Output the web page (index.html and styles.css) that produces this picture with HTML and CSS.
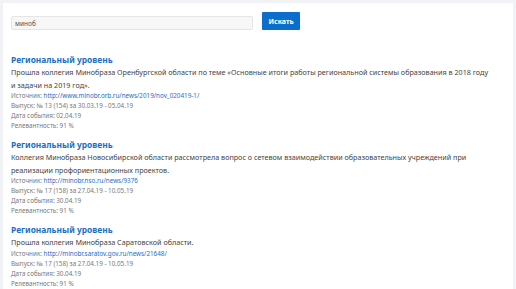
FILE: index.html
```html
<!DOCTYPE html>
<html lang="ru">

<head>
    <meta charset="UTF-8">
    <meta name="viewport" content="width=device-width, initial-scale=1.0">
    <link rel="stylesheet" href="styles.css">
    <title>Поиск</title>
</head>

<body>

    <div class="panel">

        <form class="search">
            <input class="search-input" type="text" value="минoб">
            <button class="search-button" type="button">Искать</button>
        </form>

        <section class="result">
            <h3 class="result-level">Региональный уровень</h3>
            <p class="result-text">Прошла коллегия Минобраза Оренбургской области по теме «Основные итоги работы региональной системы образования в 2018 году и задачи на 2019 год».</p>
            <div class="result-meta">
                <div>Источник: <a href="#">http://www.minobr.orb.ru/news/2019/nov_020419-1/</a></div>
                <div>Выпуск: № 13 (154) за 30.03.19 - 05.04.19</div>
                <div>Дата события: 02.04.19</div>
                <div>Релевантность: 91 %</div>
            </div>
        </section>

        <section class="result">
            <h3 class="result-level">Региональный уровень</h3>
            <p class="result-text">Коллегия Минобраза Новосибирской области рассмотрела вопрос о сетевом взаимодействии образовательных учреждений при реализации профориентационных проектов.</p>
            <div class="result-meta">
                <div>Источник: <a href="#">http://minobr.nso.ru/news/9376</a></div>
                <div>Выпуск: № 17 (158) за 27.04.19 - 10.05.19</div>
                <div>Дата события: 30.04.19</div>
                <div>Релевантность: 91 %</div>
            </div>
        </section>

        <section class="result">
            <h3 class="result-level">Региональный уровень</h3>
            <p class="result-text">Прошла коллегия Минобраза Саратовской области.</p>
            <div class="result-meta">
                <div>Источник: <a href="#">http://minobr.saratov.gov.ru/news/21648/</a></div>
                <div>Выпуск: № 17 (158) за 27.04.19 - 10.05.19</div>
                <div>Дата события: 30.04.19</div>
                <div>Релевантность: 91 %</div>
            </div>
        </section>

    </div>

</body>

</html>
```

FILE: styles.css
```css
* {
    box-sizing: border-box;
    font-family: "Noto Sans", "Open Sans", sans-serif;
}

body {
    margin: 0;
    padding: 3px 3px 0 3px;
    background-color: rgb(240, 242, 246);
    height: 289px;
    overflow: hidden;
}

.panel {
    background-color: #fff;
    min-height: 286px;
    padding: 9px 19px 0 8px;
}

.search {
    display: flex;
    align-items: flex-start;
    margin: 0;
}

.search-input {
    width: 242px;
    height: 14px;
    margin-top: 4px;
    padding: 0 3px;
    border: 1px solid rgb(229, 229, 229);
    border-radius: 2px;
    background-color: rgb(247, 247, 247);
    font-size: 6.5px;
    color: rgb(80, 80, 80);
}

.search-button {
    margin-left: 9px;
    width: 38px;
    height: 18px;
    border: none;
    border-radius: 1px;
    background-color: rgb(11, 110, 204);
    color: #fff;
    font-size: 7px;
    font-weight: bold;
    padding: 0;
}

.result {
    margin-top: 24px;
}

.result + .result {
    margin-top: 8px;
}

.result-level {
    margin: 0;
    font-size: 8.4px;
    line-height: 12px;
    font-weight: bold;
    color: rgb(26, 111, 196);
}

.result-text {
    margin: 0;
    font-size: 7.2px;
    line-height: 12.5px;
    color: rgb(68, 68, 68);
}

.result-meta {
    font-size: 6.3px;
    line-height: 10px;
    color: rgb(120, 120, 120);
}

.result-meta a {
    color: rgb(26, 111, 196);
    text-decoration: none;
}
```
